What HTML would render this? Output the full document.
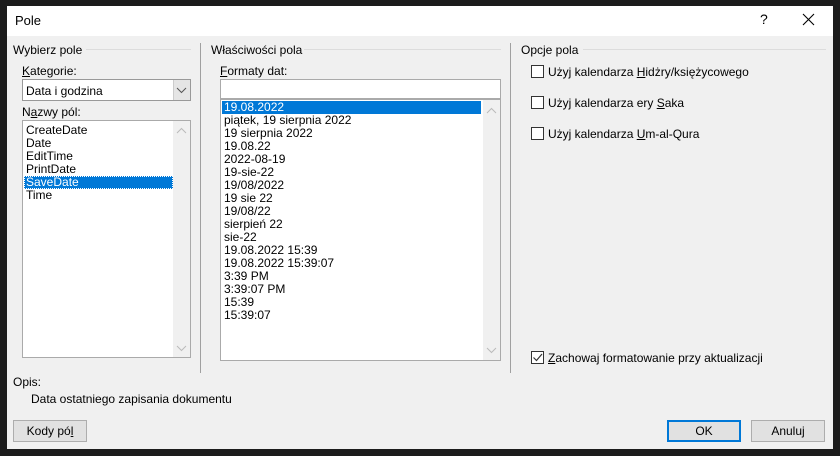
<!DOCTYPE html>
<html><head><meta charset="utf-8"><style>
*{box-sizing:border-box;margin:0;padding:0}
body{width:840px;height:456px;background:#1c1c1c;position:relative;overflow:hidden;font-family:"Liberation Sans",sans-serif;font-size:12px;color:#000}
.a{position:absolute;white-space:nowrap}
.dlg{position:absolute;left:7px;top:6px;width:826px;height:443px;background:#f0f0f0}
.tb{position:absolute;left:7px;top:6px;width:826px;height:30px;background:#fff}
.line{position:absolute;height:1px;background:#dcdcdc}
.vl{position:absolute;width:1px;background:#a0a0a0}
.box{position:absolute;background:#fff;border:1px solid #aaa}
.sel{background:#0078d7;color:#fff}
.it{position:absolute;left:3px;height:13px;line-height:13px}
.cb{position:absolute;width:13px;height:13px;border:1px solid #333;background:#fff}
.btn{position:absolute;height:22px;background:#e1e1e1;border:1px solid #adadad;text-align:center;line-height:20px}
u{text-decoration:underline}
</style></head><body>
<div class="dlg"></div>
<div class="tb"></div>
<div class="a" style="left:15px;top:13px;font-size:13px">Pole</div>
<div class="a" style="left:760px;top:11px;font-size:14px">?</div>
<svg class="a" style="left:802px;top:13px" width="13" height="13"><path d="M1 1L12 12M12 1L1 12" stroke="#000" stroke-width="1.1"/></svg>

<div class="a" style="left:13px;top:43px">Wybierz pole</div>
<div class="line" style="left:86px;top:49px;width:105px"></div>
<div class="vl" style="left:200px;top:43px;height:330px"></div>
<div class="a" style="left:22px;top:64px"><u>K</u>ategorie:</div>
<div class="box" style="left:22px;top:79px;width:169px;height:22px;border-color:#999"></div>
<div class="a" style="left:26px;top:84px">Data i godzina</div>
<div class="a" style="left:173px;top:80px;width:17px;height:20px;background:#e5e5e5;border-left:1px solid #ccc"></div>
<svg class="a" style="left:176px;top:87px" width="11" height="7"><path d="M1 1L5.5 5.5L10 1" stroke="#555" fill="none"/></svg>
<div class="a" style="left:22px;top:105px">N<u>a</u>zwy pól:</div>
<div class="box" style="left:22px;top:120px;width:169px;height:238px">
<div class="it" style="top:3px">CreateDate</div>
<div class="it" style="top:16px">Date</div>
<div class="it" style="top:29px">EditTime</div>
<div class="it" style="top:42px">PrintDate</div>
<div class="it sel" style="top:55px;left:1px;width:149px;padding-left:2px;outline:1px dotted #fff;outline-offset:-1px">SaveDate</div>
<div class="it" style="top:68px">Time</div>
<div class="a" style="left:150px;top:0;width:17px;height:236px;background:#f0f0f0"></div>
<svg class="a" style="left:153px;top:6px" width="11" height="7"><path d="M1 6L5.5 1.5L10 6" stroke="#bbb" fill="none"/></svg>
<svg class="a" style="left:153px;top:224px" width="11" height="7"><path d="M1 1L5.5 5.5L10 1" stroke="#bbb" fill="none"/></svg>
</div>

<div class="a" style="left:211px;top:43px">Właściwości pola</div>
<div class="line" style="left:304px;top:49px;width:197px"></div>
<div class="vl" style="left:510px;top:43px;height:330px"></div>
<div class="a" style="left:220px;top:64px"><u>F</u>ormaty dat:</div>
<div class="box" style="left:220px;top:79px;width:281px;height:20px"></div>
<div class="box" style="left:220px;top:99px;width:281px;height:262px">
<div class="it sel" style="top:1px;left:1px;width:259px;padding-left:2px">19.08.2022</div>
<div class="it" style="top:14px">piątek, 19 sierpnia 2022</div>
<div class="it" style="top:27px">19 sierpnia 2022</div>
<div class="it" style="top:40px">19.08.22</div>
<div class="it" style="top:53px">2022-08-19</div>
<div class="it" style="top:66px">19-sie-22</div>
<div class="it" style="top:79px">19/08/2022</div>
<div class="it" style="top:92px">19 sie 22</div>
<div class="it" style="top:105px">19/08/22</div>
<div class="it" style="top:118px">sierpień 22</div>
<div class="it" style="top:131px">sie-22</div>
<div class="it" style="top:144px">19.08.2022 15:39</div>
<div class="it" style="top:157px">19.08.2022 15:39:07</div>
<div class="it" style="top:170px">3:39 PM</div>
<div class="it" style="top:183px">3:39:07 PM</div>
<div class="it" style="top:196px">15:39</div>
<div class="it" style="top:209px">15:39:07</div>
<div class="a" style="left:262px;top:0;width:17px;height:260px;background:#f0f0f0"></div>
<svg class="a" style="left:265px;top:7px" width="11" height="7"><path d="M1 6L5.5 1.5L10 6" stroke="#bbb" fill="none"/></svg>
<svg class="a" style="left:265px;top:247px" width="11" height="7"><path d="M1 1L5.5 5.5L10 1" stroke="#bbb" fill="none"/></svg>
</div>

<div class="a" style="left:521px;top:43px">Opcje pola</div>
<div class="line" style="left:583px;top:49px;width:243px"></div>
<div class="cb" style="left:531px;top:65px"></div>
<div class="a" style="left:548px;top:65px">Użyj kalendarza <u>H</u>idżry/księżycowego</div>
<div class="cb" style="left:531px;top:96px"></div>
<div class="a" style="left:548px;top:96px">Użyj kalendarza ery <u>S</u>aka</div>
<div class="cb" style="left:531px;top:127px"></div>
<div class="a" style="left:548px;top:127px">Użyj kalendarza <u>U</u>m-al-Qura</div>
<div class="cb" style="left:531px;top:351px"></div>
<svg class="a" style="left:532px;top:352px" width="11" height="11"><path d="M1.5 5.5L4.5 8.5L10 2" stroke="#333" fill="none" stroke-width="1.2"/></svg>
<div class="a" style="left:548px;top:351px"><u>Z</u>achowaj formatowanie przy aktualizacji</div>

<div class="a" style="left:13px;top:375px">Opis:</div>
<div class="a" style="left:31px;top:392px">Data ostatniego zapisania dokumentu</div>
<div class="btn" style="left:13px;top:420px;width:74px">Kody pó<u>l</u></div>
<div class="btn" style="left:667px;top:420px;width:74px;border:2px solid #0078d7;line-height:18px">OK</div>
<div class="btn" style="left:751px;top:420px;width:74px">Anuluj</div>
</body></html>
